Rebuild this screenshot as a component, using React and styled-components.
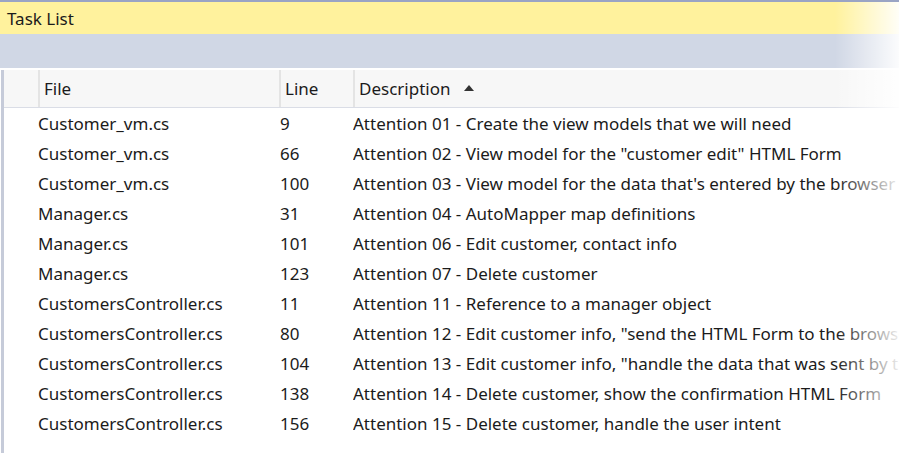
import React from 'react';
import styled, { createGlobalStyle } from 'styled-components';

const GlobalStyle = createGlobalStyle`
    html, body { margin: 0; padding: 0; background: #ffffff; }
    body { font-family: "Noto Sans", "Open Sans", sans-serif; color: #1b1b1b; }
`

const tasks = [
    { file: 'Customer_vm.cs', line: 9, desc: 'Attention 01 - Create the view models that we will need' },
    { file: 'Customer_vm.cs', line: 66, desc: 'Attention 02 - View model for the "customer edit" HTML Form' },
    { file: 'Customer_vm.cs', line: 100, desc: "Attention 03 - View model for the data that's entered by the browser" },
    { file: 'Manager.cs', line: 31, desc: 'Attention 04 - AutoMapper map definitions' },
    { file: 'Manager.cs', line: 101, desc: 'Attention 06 - Edit customer, contact info' },
    { file: 'Manager.cs', line: 123, desc: 'Attention 07 - Delete customer' },
    { file: 'CustomersController.cs', line: 11, desc: 'Attention 11 - Reference to a manager object' },
    { file: 'CustomersController.cs', line: 80, desc: 'Attention 12 - Edit customer info, "send the HTML Form to the browser user"' },
    { file: 'CustomersController.cs', line: 104, desc: 'Attention 13 - Edit customer info, "handle the data that was sent by the browser"' },
    { file: 'CustomersController.cs', line: 138, desc: 'Attention 14 - Delete customer, show the confirmation HTML Form' },
    { file: 'CustomersController.cs', line: 156, desc: 'Attention 15 - Delete customer, handle the user intent' },
];

const Window = styled.div`
    position: relative;
    width: 899px;
    height: 453px;
    overflow: hidden;
    border-top: 2px solid #9aa4c4;
    box-sizing: border-box;
    display: flex;
    flex-direction: column;
`

const TitleBar = styled.div`
    height: 32px;
    background: #fff29d;
    display: flex;
    align-items: center;
    padding-left: 7px;
    font-size: 17px;
`

const Toolbar = styled.div`
    height: 34px;
    background: #d0d7e5;
    border-bottom: 2px solid #ffffff;
`

const Grid = styled.div`
    flex: 1;
    border-left: 3px solid #c6cbd9;
    margin-left: 1px;
`

const HeaderRow = styled.div`
    display: flex;
    height: 37px;
    background: #f7f7f7;
    border-bottom: 1px solid #dadde6;
`

const HeaderCell = styled.div`
    width: ${p => p.$w}px;
    flex: ${p => p.$w ? 'none' : 1};
    display: flex;
    align-items: center;
    padding-left: 4px;
    box-sizing: border-box;
    border-left: ${p => p.$first ? 'none' : '2px solid #e4e4e4'};
    font-size: 17px;
    gap: 14px;
`

const SortArrow = styled.span`
    width: 0;
    height: 0;
    border-left: 5px solid transparent;
    border-right: 5px solid transparent;
    border-bottom: 6px solid #333333;
    margin-top: -2px;
`

const Row = styled.div`
    display: flex;
    height: 30px;
    align-items: center;
    font-size: 17px;
    white-space: nowrap;
`

const Cell = styled.div`
    width: ${p => p.$w}px;
    flex: ${p => p.$w ? 'none' : 1};
    box-sizing: border-box;
    overflow: hidden;
`

const Fade = styled.div`
    position: absolute;
    top: 0;
    right: 0;
    width: 64px;
    height: 100%;
    background: linear-gradient(to right, rgba(255,255,255,0), rgba(255,255,255,0.92));
    pointer-events: none;
`

const App = () => {
    return (
        <React.Fragment>
            <GlobalStyle />
            <Window>
                <TitleBar>Task List</TitleBar>
                <Toolbar />
                <Grid>
                    <HeaderRow>
                        <HeaderCell $w={34} $first />
                        <HeaderCell $w={241}>File</HeaderCell>
                        <HeaderCell $w={74}>Line</HeaderCell>
                        <HeaderCell>Description <SortArrow /></HeaderCell>
                    </HeaderRow>
                    {tasks.map((t, i) => (
                        <Row key={i}>
                            <Cell $w={34} />
                            <Cell $w={242}>{t.file}</Cell>
                            <Cell $w={73}>{t.line}</Cell>
                            <Cell>{t.desc}</Cell>
                        </Row>
                    ))}
                </Grid>
                <Fade />
            </Window>
        </React.Fragment>
    );
}

export default App;
